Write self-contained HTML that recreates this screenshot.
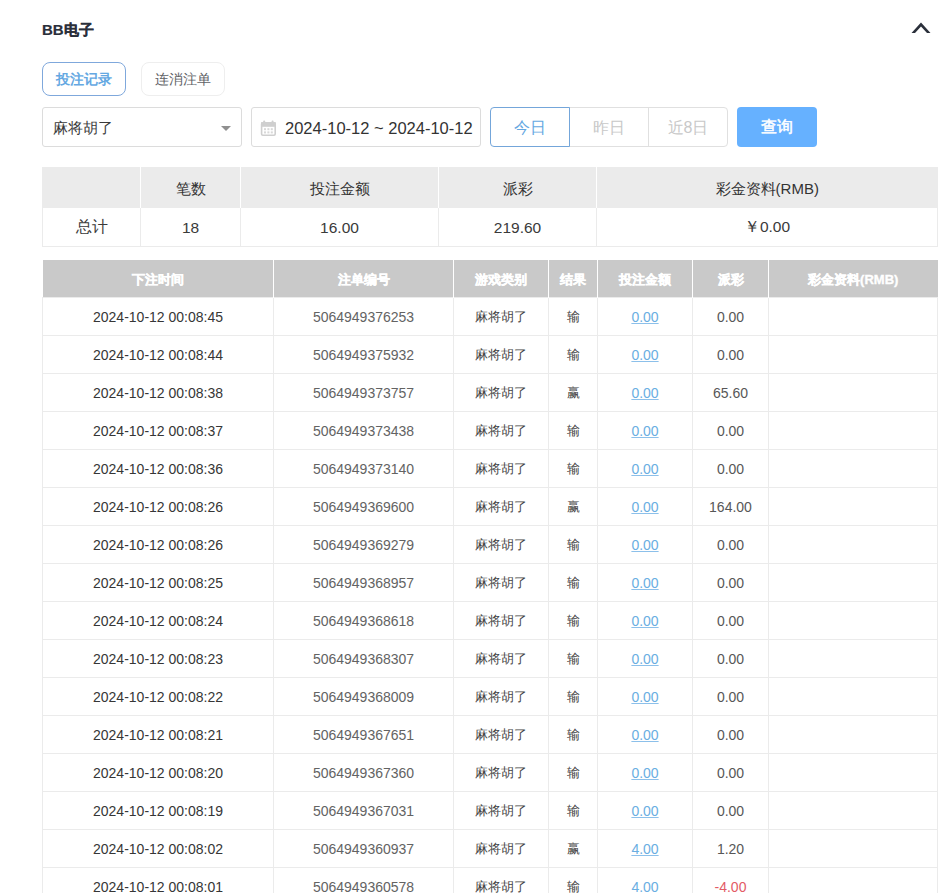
<!DOCTYPE html>
<html><head><meta charset="utf-8">
<style>
*{box-sizing:border-box;margin:0;padding:0}
html,body{width:952px;height:893px;overflow:hidden;background:#fff}
body{font-family:"Liberation Sans",sans-serif;color:#303133;position:relative}
.abs{position:absolute}
.title{left:42px;top:20px;font-size:15px;font-weight:bold;color:#2a2f3a;line-height:20px;-webkit-text-stroke:0.2px #2a2f3a}
.chev{left:905px;top:15px;width:32px;height:24px}
.tab{top:62px;height:34px;width:84px;border-radius:8px;font-size:13.6px;line-height:34px;text-align:center}
.tab1{left:42px;border:1px solid #7fa8dc;color:#64a8e2;font-weight:bold}
.tab2{left:141px;border:1px solid #eeeeee;color:#606266}
.sel{left:42px;top:107px;width:200px;height:40px;border:1px solid #dcdcdc;border-radius:3px;font-size:15px;line-height:40px;padding-left:10px;color:#3a3a3a}
.tri{left:221px;top:126px;width:0;height:0;border-left:5.5px solid transparent;border-right:5.5px solid transparent;border-top:5px solid #909090}
.date{left:251px;top:107px;width:230px;height:40px;border:1px solid #dcdcdc;border-radius:3px;font-size:16.5px;line-height:40px;padding-left:33px;color:#333}
.cal{left:260px;top:120px;width:16px;height:16px}
.bg{top:107px;height:40px;width:80px;font-size:16px;line-height:40px;text-align:center;color:#c8c8c8;border:1px solid #e0e0e0}
.b1{left:490px;border-color:#74a6da;color:#64a8e2;border-radius:4px 0 0 4px;z-index:2}
.b2{left:569px}
.b3{left:648px;border-radius:0 4px 4px 0}
.q{left:737px;top:107px;width:80px;height:40px;background:#66b1ff;border-radius:4px;color:#fff;font-size:16px;line-height:40px;text-align:center;font-weight:normal;-webkit-text-stroke:0.5px #fff}
table{border-collapse:collapse;table-layout:fixed;position:absolute;left:42px;width:896px}
.sum{top:167px}
.sum th{background:#ebebeb;font-weight:normal;height:40px;font-size:15px;color:#333;padding-top:6px;border-left:2px solid #fff}
.sum th:first-child{border-left:1px solid #ebebeb}
.sum th+th{border-left:1px solid #fff}
.sum td{height:39px;font-size:15.5px;text-align:center;border:1px solid #ebebeb;color:#3a3a3a;padding-top:2px}
.main{top:260px}
.main th{background:#c9c9c9;color:#fff;font-weight:bold;font-size:13px;height:37px;border-left:1px solid #fff;padding-top:3px;-webkit-text-stroke:0.35px #fff}
.main th:first-child{border-left:none}
.main td{height:38px;text-align:center;border:1px solid #ebebeb;font-size:14px;color:#363636;padding-top:2px}
.main td.c2{color:#636363}
.main td.c6{color:#575757}
.main td.c3,.main td.c4{font-size:13px;color:#444}
.main td.c5 a{color:#6aaee2;text-decoration:underline;text-decoration-color:#8cc0ea}
.main td.c6 .neg{color:#e35b66}
</style></head><body>
<div class="abs title">BB电子</div>
<svg class="abs chev" viewBox="0 0 32 24"><path d="M6.5 18 L16 7.6 L25.5 18 L22 18 L16 11.4 L10 18 Z" fill="#2b303b"/></svg>
<div class="abs tab tab1">投注记录</div>
<div class="abs tab tab2">连消注单</div>
<div class="abs sel">麻将胡了</div>
<div class="abs tri"></div>
<div class="abs date">2024-10-12 ~ 2024-10-12</div>
<svg class="abs cal" viewBox="0 0 16 16"><rect x="1.6" y="2.8" width="13.6" height="12.4" rx="1.2" fill="none" stroke="#cfcfcf" stroke-width="1.6"/><rect x="1" y="2.2" width="14.8" height="4.6" fill="#cfcfcf"/><rect x="3.2" y="0.6" width="2" height="3.6" rx="0.8" fill="#cfcfcf"/><rect x="11.6" y="0.6" width="2" height="3.6" rx="0.8" fill="#cfcfcf"/><g fill="#d8d8d8"><rect x="4" y="8.2" width="2" height="2"/><rect x="7.4" y="8.2" width="2" height="2"/><rect x="10.8" y="8.2" width="2" height="2"/><rect x="4" y="11.4" width="2" height="2"/><rect x="7.4" y="11.4" width="2" height="2"/><rect x="10.8" y="11.4" width="2" height="2"/></g></svg>
<div class="abs bg b2">昨日</div>
<div class="abs bg b3">近8日</div>
<div class="abs bg b1">今日</div>
<div class="abs q">查询</div>
<table class="sum">
<colgroup><col style="width:98px"><col style="width:100px"><col style="width:198px"><col style="width:158px"><col></colgroup>
<tr><th></th><th>笔数</th><th>投注金额</th><th>派彩</th><th>彩金资料(RMB)</th></tr>
<tr><td>总计</td><td>18</td><td>16.00</td><td>219.60</td><td>￥0.00</td></tr>
</table>
<table class="main">
<colgroup><col style="width:231px"><col style="width:180px"><col style="width:95px"><col style="width:49px"><col style="width:95px"><col style="width:76px"><col></colgroup>
<tr><th>下注时间</th><th>注单编号</th><th>游戏类别</th><th>结果</th><th>投注金额</th><th>派彩</th><th>彩金资料(RMB)</th></tr>
<tr><td class="c1">2024-10-12 00:08:45</td><td class="c2">5064949376253</td><td class="c3">麻将胡了</td><td class="c4">输</td><td class="c5"><a>0.00</a></td><td class="c6"><span>0.00</span></td><td class="c7"></td></tr>
<tr><td class="c1">2024-10-12 00:08:44</td><td class="c2">5064949375932</td><td class="c3">麻将胡了</td><td class="c4">输</td><td class="c5"><a>0.00</a></td><td class="c6"><span>0.00</span></td><td class="c7"></td></tr>
<tr><td class="c1">2024-10-12 00:08:38</td><td class="c2">5064949373757</td><td class="c3">麻将胡了</td><td class="c4">赢</td><td class="c5"><a>0.00</a></td><td class="c6"><span>65.60</span></td><td class="c7"></td></tr>
<tr><td class="c1">2024-10-12 00:08:37</td><td class="c2">5064949373438</td><td class="c3">麻将胡了</td><td class="c4">输</td><td class="c5"><a>0.00</a></td><td class="c6"><span>0.00</span></td><td class="c7"></td></tr>
<tr><td class="c1">2024-10-12 00:08:36</td><td class="c2">5064949373140</td><td class="c3">麻将胡了</td><td class="c4">输</td><td class="c5"><a>0.00</a></td><td class="c6"><span>0.00</span></td><td class="c7"></td></tr>
<tr><td class="c1">2024-10-12 00:08:26</td><td class="c2">5064949369600</td><td class="c3">麻将胡了</td><td class="c4">赢</td><td class="c5"><a>0.00</a></td><td class="c6"><span>164.00</span></td><td class="c7"></td></tr>
<tr><td class="c1">2024-10-12 00:08:26</td><td class="c2">5064949369279</td><td class="c3">麻将胡了</td><td class="c4">输</td><td class="c5"><a>0.00</a></td><td class="c6"><span>0.00</span></td><td class="c7"></td></tr>
<tr><td class="c1">2024-10-12 00:08:25</td><td class="c2">5064949368957</td><td class="c3">麻将胡了</td><td class="c4">输</td><td class="c5"><a>0.00</a></td><td class="c6"><span>0.00</span></td><td class="c7"></td></tr>
<tr><td class="c1">2024-10-12 00:08:24</td><td class="c2">5064949368618</td><td class="c3">麻将胡了</td><td class="c4">输</td><td class="c5"><a>0.00</a></td><td class="c6"><span>0.00</span></td><td class="c7"></td></tr>
<tr><td class="c1">2024-10-12 00:08:23</td><td class="c2">5064949368307</td><td class="c3">麻将胡了</td><td class="c4">输</td><td class="c5"><a>0.00</a></td><td class="c6"><span>0.00</span></td><td class="c7"></td></tr>
<tr><td class="c1">2024-10-12 00:08:22</td><td class="c2">5064949368009</td><td class="c3">麻将胡了</td><td class="c4">输</td><td class="c5"><a>0.00</a></td><td class="c6"><span>0.00</span></td><td class="c7"></td></tr>
<tr><td class="c1">2024-10-12 00:08:21</td><td class="c2">5064949367651</td><td class="c3">麻将胡了</td><td class="c4">输</td><td class="c5"><a>0.00</a></td><td class="c6"><span>0.00</span></td><td class="c7"></td></tr>
<tr><td class="c1">2024-10-12 00:08:20</td><td class="c2">5064949367360</td><td class="c3">麻将胡了</td><td class="c4">输</td><td class="c5"><a>0.00</a></td><td class="c6"><span>0.00</span></td><td class="c7"></td></tr>
<tr><td class="c1">2024-10-12 00:08:19</td><td class="c2">5064949367031</td><td class="c3">麻将胡了</td><td class="c4">输</td><td class="c5"><a>0.00</a></td><td class="c6"><span>0.00</span></td><td class="c7"></td></tr>
<tr><td class="c1">2024-10-12 00:08:02</td><td class="c2">5064949360937</td><td class="c3">麻将胡了</td><td class="c4">赢</td><td class="c5"><a>4.00</a></td><td class="c6"><span>1.20</span></td><td class="c7"></td></tr>
<tr><td class="c1">2024-10-12 00:08:01</td><td class="c2">5064949360578</td><td class="c3">麻将胡了</td><td class="c4">输</td><td class="c5"><a>4.00</a></td><td class="c6"><span class="neg">-4.00</span></td><td class="c7"></td></tr>
</table>
</body></html>
